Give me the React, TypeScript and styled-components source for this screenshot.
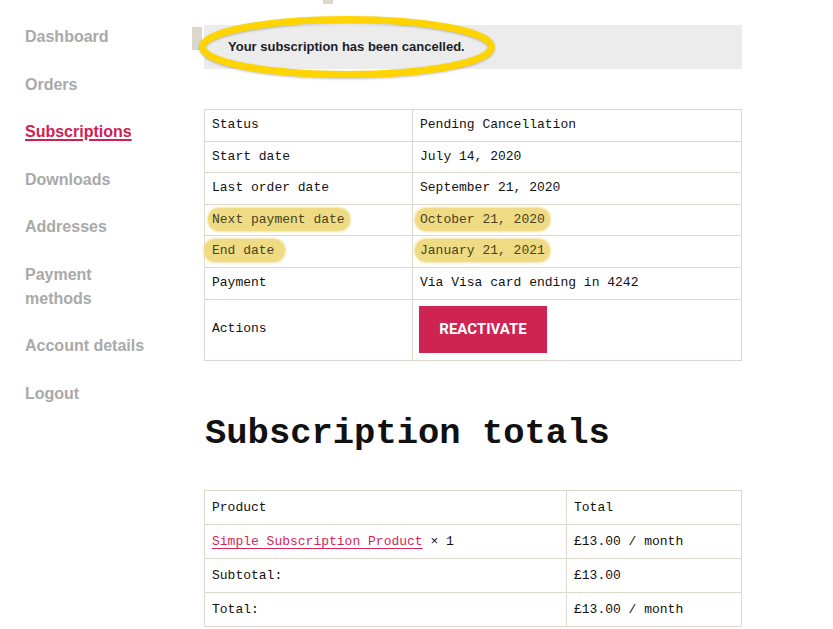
import * as React from 'react';
import styled, { createGlobalStyle } from 'styled-components';

const GlobalStyle = createGlobalStyle`
  *, *::before, *::after { box-sizing: border-box; }
  body {
    margin: 0;
    background: #fff;
    font-family: "Liberation Sans", Arial, sans-serif;
  }
`

const Page = styled.div`
  display: flex;
  width: 833px;
  height: 629px;
  overflow: hidden;
`

const Sidebar = styled.nav`
  width: 192px;
  flex-shrink: 0;
  padding: 25px 0 0 25px;
  display: flex;
  flex-direction: column;
  align-items: flex-start;
  gap: 23.5px;
`

const NavLink = styled.a<{ $active?: boolean }>`
  max-width: 125px;
  font: 700 16px/24px "Liberation Sans", Arial, sans-serif;
  color: ${p => (p.$active ? '#cf2152' : '#a9a9a9')};
  text-decoration: ${p => (p.$active ? 'underline' : 'none')};
  text-decoration-thickness: 2px;
  text-underline-offset: 2px;
  cursor: pointer;
`

const Content = styled.main`
  width: 560px;
  display: flex;
  flex-direction: column;
  align-items: flex-start;
`

const TopStub = styled.div`
  width: 10px;
  height: 4px;
  margin-left: 131px;
  background: #dcd7cc;
`

const NoticeRow = styled.div`
  position: relative;
  display: flex;
  align-items: flex-start;
  gap: 2px;
  margin-top: 21px;
`

const NoticeTab = styled.span`
  width: 10px;
  height: 23px;
  margin-top: 2px;
  background: #dcd7cc;
`

const Notice = styled.div`
  width: 538px;
  height: 44px;
  padding: 0 0 1px 24px;
  display: flex;
  align-items: center;
  background: #ececec;
  font: 700 13px "Liberation Sans", Arial, sans-serif;
  color: #1d1d29;
`

const Annotation = styled.svg`
  position: absolute;
  left: 0;
  top: -15px;
  overflow: visible;
  pointer-events: none;
  filter: drop-shadow(0 1px 1px rgba(0, 0, 0, 0.25));
`

const Table = styled.table<{ $first: number; $pad: string; $lh: string }>`
  margin-left: 12px;
  width: 538px;
  border-collapse: collapse;
  font: 400 13px/${p => p.$lh} "Liberation Mono", "Courier New", monospace;
  color: #111;

  td, th {
    border: 1px solid #ddd8cc;
    padding: ${p => p.$pad};
    text-align: left;
    font-weight: 400;
    vertical-align: middle;
  }
  td:first-child, th:first-child {
    width: ${p => p.$first}px;
  }
`

const DetailsTable = styled(Table)`
  margin-top: 40px;
`

const TotalsTable = styled(Table)``

const Mark = styled.span<{ $l: number; $r: number }>`
  background: #efdb84;
  color: #4a4220;
  border-radius: 11px;
  padding: 4px ${p => p.$r}px 4px ${p => p.$l}px;
  margin: 0 -${p => p.$r}px 0 -${p => p.$l}px;
  box-shadow: 0 0 2px 1px rgba(239, 219, 132, 0.7);
`

const ActionCell = styled.td`
  && {
    padding: 6px 6px 7px;
  }
`

const Button = styled.button`
  width: 128px;
  height: 47px;
  border: none;
  background: #ce2452;
  color: #fff;
  font: 700 15px "Roboto", "Liberation Sans", sans-serif;
  cursor: pointer;
  display: block;
`

const Heading = styled.h2`
  margin: 51px 0 34px 13px;
  font: 700 35.5px/44px "Liberation Mono", "Courier New", monospace;
  color: #111;
`

const ProductLink = styled.a`
  color: #d0285a;
  text-decoration: underline;
  text-underline-offset: 3px;
  cursor: pointer;
`

const navItems = [
  'Dashboard',
  'Orders',
  'Subscriptions',
  'Downloads',
  'Addresses',
  'Payment methods',
  'Account details',
  'Logout',
]

const App: React.FunctionComponent = () => {
  return (
    <Page>
      <GlobalStyle />
      <Sidebar>
        {navItems.map(item => (
          <NavLink key={item} $active={item === 'Subscriptions'}>{item}</NavLink>
        ))}
      </Sidebar>

      <Content>
        <TopStub />
        <NoticeRow>
          <NoticeTab />
          <Notice>Your subscription has been cancelled.</Notice>
          <Annotation width={320} height={80}>
            <ellipse cx={155} cy={37} rx={144.5} ry={27.5} fill='none' stroke='#ffd400' strokeWidth={7} />
          </Annotation>
        </NoticeRow>

        <DetailsTable $first={208} $pad='8px 7px' $lh='14.6px'>
          <tbody>
            <tr><td>Status</td><td>Pending Cancellation</td></tr>
            <tr><td>Start date</td><td>July 14, 2020</td></tr>
            <tr><td>Last order date</td><td>September 21, 2020</td></tr>
            <tr>
              <td><Mark $l={4} $r={5}>Next payment date</Mark></td>
              <td><Mark $l={5} $r={5}>October 21, 2020</Mark></td>
            </tr>
            <tr>
              <td><Mark $l={8} $r={11}>End date</Mark></td>
              <td><Mark $l={5} $r={5}>January 21, 2021</Mark></td>
            </tr>
            <tr><td>Payment</td><td>Via Visa card ending in 4242</td></tr>
            <tr>
              <td>Actions</td>
              <ActionCell><Button>REACTIVATE</Button></ActionCell>
            </tr>
          </tbody>
        </DetailsTable>

        <Heading>Subscription totals</Heading>

        <TotalsTable $first={362} $pad='9px 7px' $lh='15px'>
          <thead>
            <tr><th>Product</th><th>Total</th></tr>
          </thead>
          <tbody>
            <tr>
              <td><ProductLink>Simple Subscription Product</ProductLink> × 1</td>
              <td>£13.00 / month</td>
            </tr>
            <tr><td>Subtotal:</td><td>£13.00</td></tr>
            <tr><td>Total:</td><td>£13.00 / month</td></tr>
          </tbody>
        </TotalsTable>
      </Content>
    </Page>
  );
};

export default App;
